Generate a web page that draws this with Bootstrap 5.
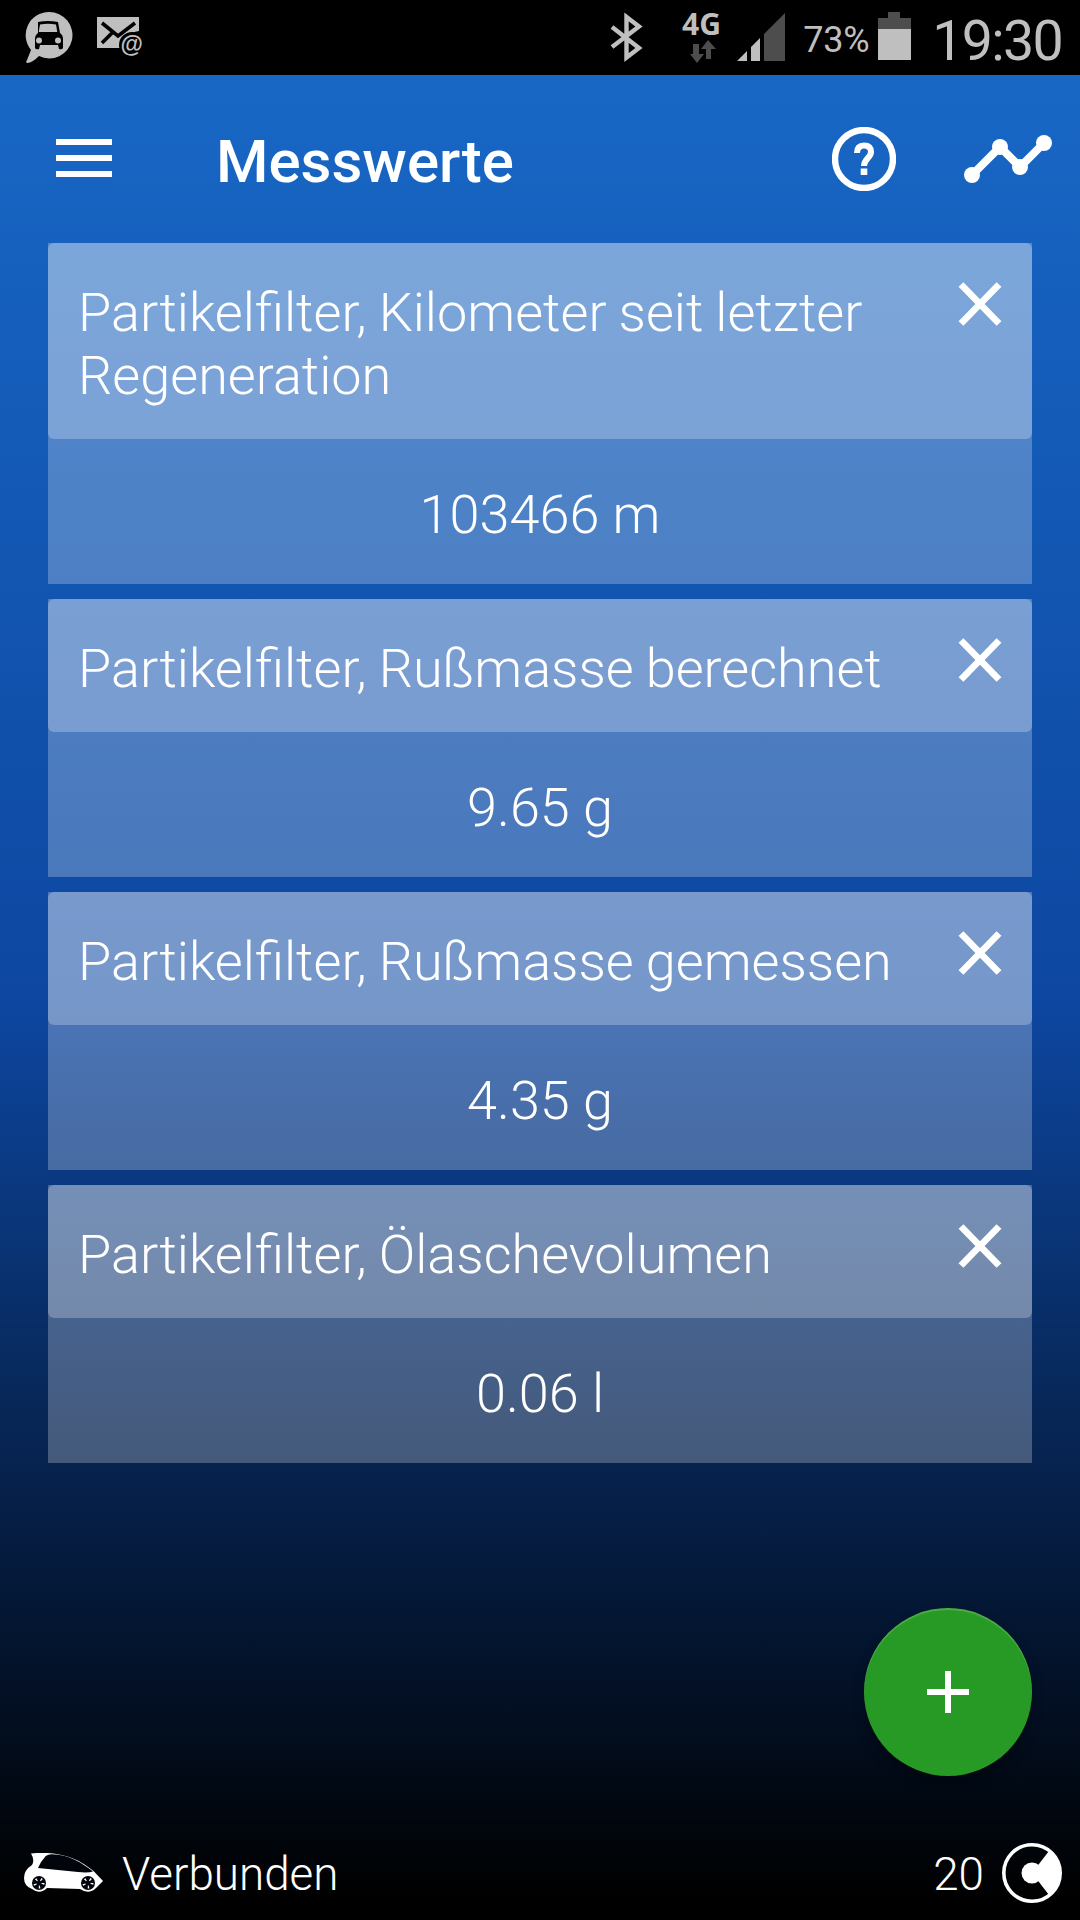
<!DOCTYPE html>
<html lang="de">
<head>
<meta charset="utf-8">
<meta name="viewport" content="width=device-width, initial-scale=1">
<title>Messwerte</title>
<link rel="stylesheet" href="https://cdn.jsdelivr.net/npm/bootstrap@5.3.0/dist/css/bootstrap.min.css">
<style>
  body { font-family: Roboto, "Liberation Sans", sans-serif; font-weight: 300; background: #000; color: #fff; }
  svg { display: block; flex: none; }
  .screen { height: 1920px; overflow: hidden; }
  .statusbar { height: 75px; background: #000; color: #bfbfbf; font-weight: 400; padding: 0 18px 0 25px; line-height: 1; }
  .icon-mail { margin-left: 24px; }
  .icon-bars { margin-left: 13px; }
  .statusbar .percent { font-size: 36px; margin: 5px 9px 0 18px; letter-spacing: -.3px; }
  .statusbar .clock { font-size: 55.5px; margin: 8px 0 0 21px; letter-spacing: -1.7px; }
  .network { margin-left: 38px; }
  .network text { font: 700 31px "Open Sans", "Noto Sans", sans-serif; fill: #bfbfbf; }
  .app { background: linear-gradient(#1867c5 0, #0d47a1 50%, #000 99%); }
  .topbar { height: 168px; padding: 0 28px 0 56px; }
  .topbar .menu { margin-bottom: 2px; }
  .topbar h1 { font-size: 60px; font-weight: 500; line-height: 70px; margin: 5px 0 0 104px; }
  .icon-trend { margin-left: 68px; }
  .readings { padding: 0 48px; gap: 15px; }
  .reading { background: rgba(255,255,255,.25); font-size: 54px; line-height: 63px; }
  .reading-head { background: rgba(255,255,255,.25); border-radius: 6px; padding: 38px 28px 32px 30px; }
  .reading-head p { max-width: 830px; word-spacing: -1.2px; }
  .btn-remove { padding: 0; border: 0; margin: -1px 0 0 0; }
  .reading-value { height: 145px; padding-top: 44px; }
  .fab { width: 168px; height: 168px; padding: 0; border: 0; border-radius: 50%; background: #279a25; box-shadow: inset 0 2px 1px rgba(255,255,255,.18), 0 6px 12px rgba(0,0,0,.35); margin: 0 48px 58px 0; }
  .footbar { height: 86px; font-size: 45.800px; line-height: 54px; padding: 0 18px 8px 24px; }
  .foot-label { margin: 3px 0 0 18px; }
  .foot-count { margin: 3px 18px 0 0; }
</style>
<script src="https://cdn.jsdelivr.net/npm/bootstrap@5.3.0/dist/js/bootstrap.bundle.min.js"></script>
</head>
<body>
<div class="screen d-flex flex-column">

  <div class="statusbar d-flex align-items-center">
    <svg width="48" height="75" viewBox="0 0 48 75">
      <path fill="#bfbfbf" d="M24 12A23.200 23.200 0 1 1 14 56Q8 62 3 63Q0 63 2 60L6 50A23.200 23.200 0 0 1 24 12Z"/>
      <path d="M13 22q10-2 20 0l2 11q3 2 3 6v9q-1 2-4 1l-1-4H15l-1 4q-3 1-4-1v-9q0-4 3-6z"/>
      <path fill="#bfbfbf" d="M15 24.500q8-1.600 16 0l1.300 7.500H13.700z"/>
      <circle cx="14" cy="40.500" r="3" fill="#bfbfbf"/><circle cx="33" cy="40.500" r="3" fill="#bfbfbf"/>
    </svg>
    <svg class="icon-mail" width="48" height="75" viewBox="0 0 48 75">
      <path fill="#bfbfbf" d="M0 17h42v14q-15 2-18 17H0z"/>
      <path d="M5 23l16 13 17-13M5 43l10-10" fill="none" stroke="#000" stroke-width="3.600"/>
      <circle cx="35" cy="45" r="13" fill="#000"/>
      <text x="23.500" y="52" font-family="Liberation Sans, sans-serif" font-size="23" font-weight="700" fill="#bfbfbf">@</text>
    </svg>

    <svg class="ms-auto" width="34" height="75" viewBox="0 0 34 75">
      <path d="M2 27l27 21-12.500 9.500V17L29 26.500 2 47" fill="none" stroke="#bfbfbf" stroke-width="4.400"/>
    </svg>
    <svg class="network" width="42" height="75" viewBox="0 0 42 75">
      <text x="0" y="35" textLength="39" lengthAdjust="spacingAndGlyphs">4G</text>
      <path fill="#4d4d4d" d="M11 44h6v10h5l-7 9-7-9h3zM24 59v-10h-5l7-9 8 9h-5v10z"/>
    </svg>
    <svg class="icon-bars" width="48" height="75" viewBox="0 0 48 75">
      <path fill="#bfbfbf" d="M0 61l10-10v10zM14 61V47l9-9v23z"/><path fill="#4d4d4d" d="M27 61V34l21-21v48z"/>
    </svg>
    <span class="percent">73%</span>
    <svg width="33" height="75" viewBox="0 0 33 75"><path fill="#4d4d4d" d="M0 29V18h10v-6h12v6h11v11z"/><path fill="#bfbfbf" d="M0 29h33v31H0z"/></svg>
    <span class="clock">19:30</span>
  </div>

  <div class="app d-flex flex-column flex-grow-1">
    <header class="topbar d-flex align-items-center">
      <svg class="menu" width="56" height="38" viewBox="0 0 56 38" fill="#fff"><path d="M0 0h56v6H0zM0 16h56v6H0zM0 32h56v6H0z"/></svg>
      <h1>Messwerte</h1>
      <svg class="ms-auto" width="64" height="64" viewBox="0 0 64 64">
        <circle cx="32" cy="32" r="29" fill="none" stroke="#fff" stroke-width="6.400"/>
        <path d="M25 26q0-7.500 7-7.500t7 6.500c0 6-7 6.500-7 14" fill="none" stroke="#fff" stroke-width="6"/>
        <path fill="#fff" d="M28.700 41.500h6.600v6.500h-6.600z"/>
      </svg>
      <svg class="icon-trend" width="88" height="48" viewBox="0 0 88 48" fill="#fff">
        <path d="M8 40l28-28 20 20L80 8" fill="none" stroke="#fff" stroke-width="8"/>
        <circle cx="8" cy="40" r="8"/><circle cx="36" cy="12" r="8"/><circle cx="56" cy="32" r="8"/><circle cx="80" cy="8" r="8"/>
      </svg>
    </header>

    <main class="readings d-flex flex-column">
      <section class="reading">
        <div class="reading-head d-flex justify-content-between align-items-start">
          <p class="mb-0">Partikelfilter, Kilometer seit letzter Regeneration</p>
          <button class="btn btn-remove" aria-label="Entfernen"><svg width="48" height="48" viewBox="0 0 48 48"><path d="M5 4.500l38 39M43 4.500l-38 39" stroke="#fff" stroke-width="6.800"/></svg></button>
        </div>
        <div class="reading-value text-center">103466 m</div>
      </section>
      <section class="reading">
        <div class="reading-head d-flex justify-content-between align-items-start">
          <p class="mb-0">Partikelfilter, Rußmasse berechnet</p>
          <button class="btn btn-remove" aria-label="Entfernen"><svg width="48" height="48" viewBox="0 0 48 48"><path d="M5 4.500l38 39M43 4.500l-38 39" stroke="#fff" stroke-width="6.800"/></svg></button>
        </div>
        <div class="reading-value text-center">9.65 g</div>
      </section>
      <section class="reading">
        <div class="reading-head d-flex justify-content-between align-items-start">
          <p class="mb-0">Partikelfilter, Rußmasse gemessen</p>
          <button class="btn btn-remove" aria-label="Entfernen"><svg width="48" height="48" viewBox="0 0 48 48"><path d="M5 4.500l38 39M43 4.500l-38 39" stroke="#fff" stroke-width="6.800"/></svg></button>
        </div>
        <div class="reading-value text-center">4.35 g</div>
      </section>
      <section class="reading">
        <div class="reading-head d-flex justify-content-between align-items-start">
          <p class="mb-0">Partikelfilter, Ölaschevolumen</p>
          <button class="btn btn-remove" aria-label="Entfernen"><svg width="48" height="48" viewBox="0 0 48 48"><path d="M5 4.500l38 39M43 4.500l-38 39" stroke="#fff" stroke-width="6.800"/></svg></button>
        </div>
        <div class="reading-value text-center">0.06 l</div>
      </section>
    </main>

    <button class="btn fab d-flex align-items-center justify-content-center mt-auto ms-auto" aria-label="Hinzufügen">
      <svg width="42" height="42" viewBox="0 0 42 42"><path fill="#fff" d="M18 0h6v18h18v6H24v18h-6V24H0v-6h18z"/></svg>
    </button>

    <footer class="footbar d-flex align-items-center">
      <svg width="80" height="40" viewBox="0 0 80 40">
        <path fill="#fff" d="M7 .500C40-2 56 7 70 18.500L79 28L72 35Q65 42 56 36L23 35Q16 42 8 36Q0 33 0 25Q0 17 8 12Q11 7 7 .500Z"/>
        <path fill="#02040b" d="M21 4Q22 1.700 28 1.300C45 1.500 58 10 69 18.500Q64 20 54 19L14 15Q17 8 21 4Z"/>
        <g fill="#02040b"><circle cx="15" cy="30" r="7"/><circle cx="64" cy="30" r="7"/></g>
        <g fill="none" stroke="#fff" stroke-width="3" stroke-dasharray="1.300 3.730"><circle cx="15" cy="30" r="4"/><circle cx="64" cy="30" r="4"/></g>
      </svg>
      <span class="foot-label">Verbunden</span>
      <span class="foot-count ms-auto">20</span>
      <svg width="60" height="60" viewBox="0 0 60 60">
        <circle cx="30" cy="30" r="28.200" fill="none" stroke="#fff" stroke-width="3.600"/>
        <circle cx="30" cy="30" r="10.500" fill="#fff"/>
        <path fill="#fff" d="M30 30L47 8Q59 16 59 30T47 52Z"/>
      </svg>
    </footer>
  </div>
</div>
</body>
</html>
